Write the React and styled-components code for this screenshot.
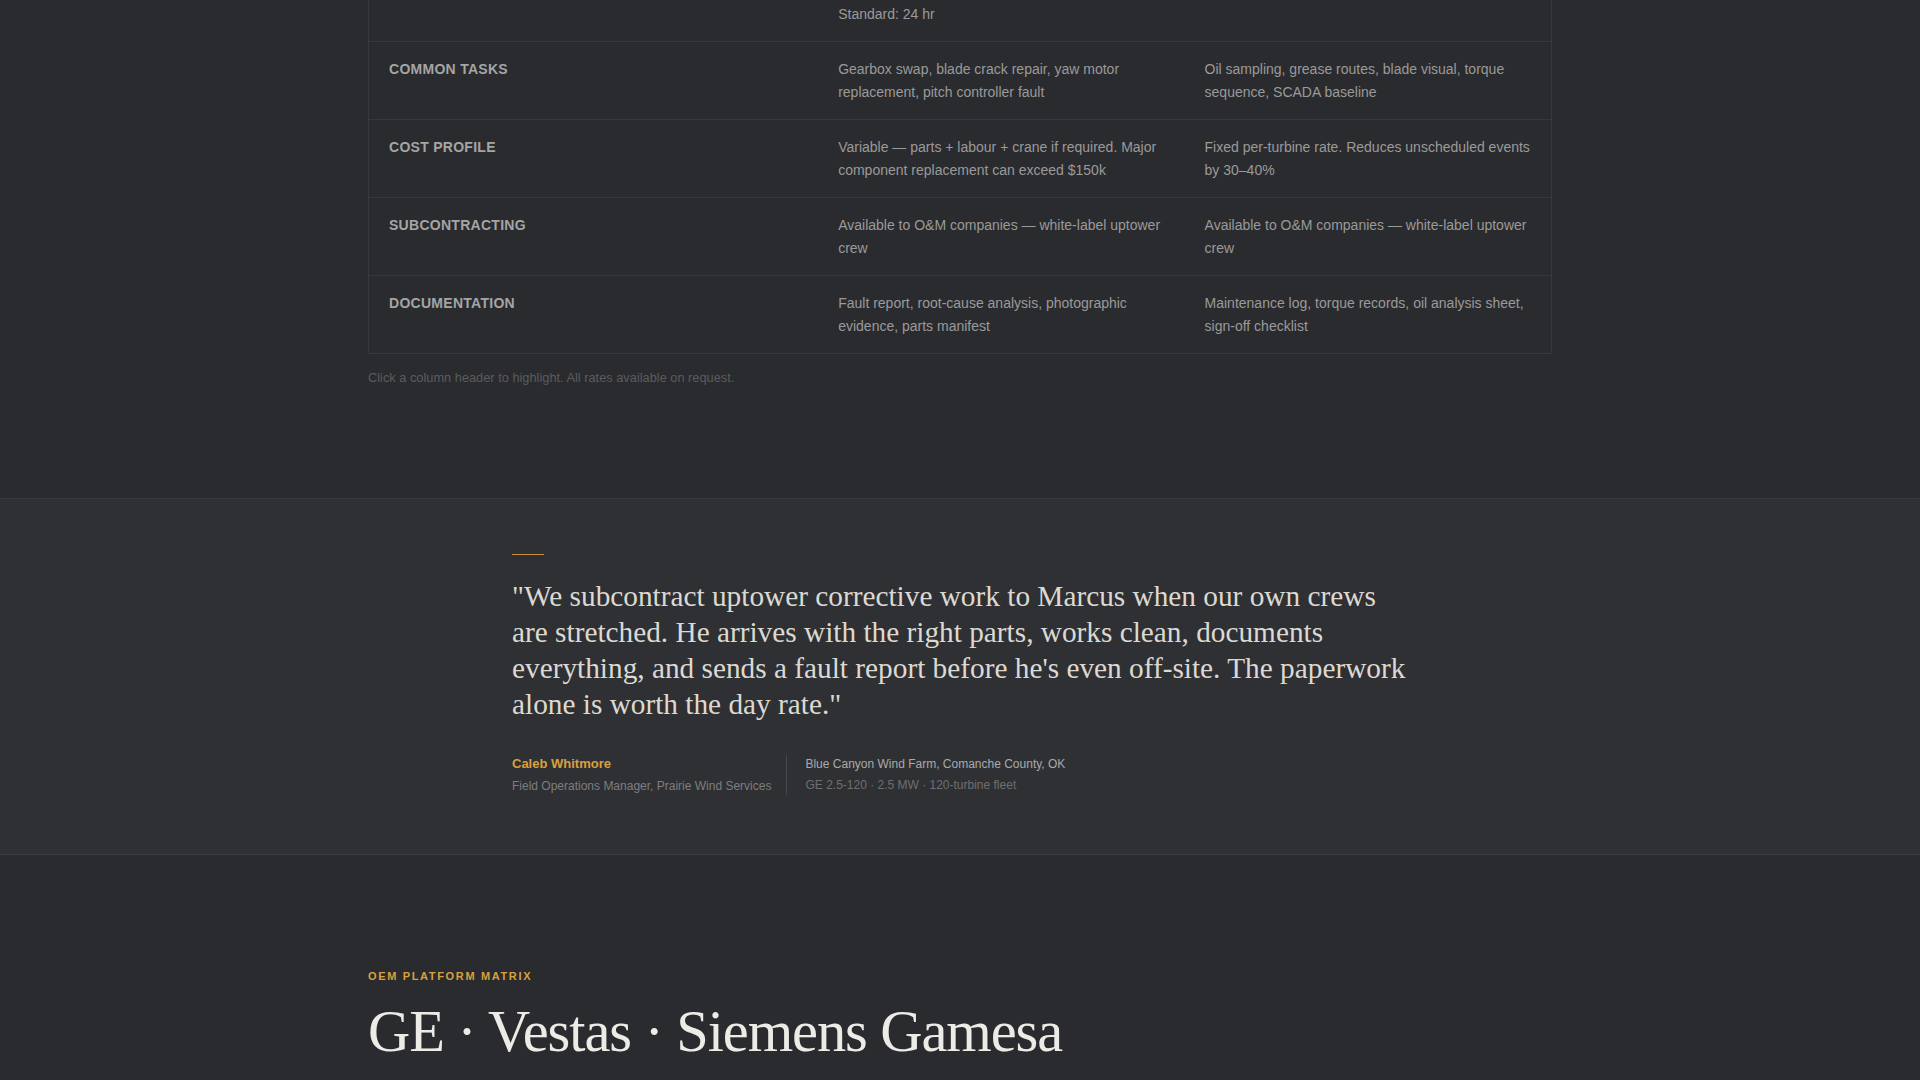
import React from "react";
import styled, { createGlobalStyle } from "styled-components";

const GlobalStyle = createGlobalStyle`
  html, body {
    margin: 0;
    padding: 0;
    background: #2a2b2e;
    font-family: "Liberation Sans", Arial, sans-serif;
    -webkit-font-smoothing: antialiased;
  }
`;

const Section = styled.section`
  background: ${(p) => (p.$alt ? "#2f3033" : "#2a2b2e")};
  border-top: ${(p) => (p.$alt ? "1px solid #3a3b3e" : "none")};
  border-bottom: ${(p) => (p.$alt ? "1px solid #3a3b3e" : "none")};
  padding: ${(p) => p.$pad || "0"};
`;

const Container = styled.div`
  width: ${(p) => p.$width || "1184px"};
  margin: 0 auto;
`;

const Table = styled.div`
  border: 1px solid #38393c;
  border-top: none;
`;

const Row = styled.div`
  display: grid;
  grid-template-columns: 38% 31% 31%;
  border-top: ${(p) => (p.$first ? "none" : "1px solid #37383b")};
`;

const Cell = styled.div`
  padding: ${(p) => (p.$partial ? "3px 20px 15px" : "16px 20px 15px")};
  font-size: 14px;
  line-height: 23px;
  color: #9a9a9a;
`;

const Label = styled(Cell)`
  font-size: 14px;
  font-weight: 700;
  letter-spacing: 0.02em;
  text-transform: uppercase;
  color: #a5a5a5;
`;

const Note = styled.p`
  margin: 15px 0 0;
  font-size: 12.8px;
  line-height: 18px;
  color: #5b5c5f;
`;

const Rule = styled.div`
  width: 32px;
  height: 1px;
  background: #c8913a;
  margin-bottom: 23px;
`;

const Quote = styled.blockquote`
  margin: 0;
  font-family: "Liberation Serif", "Times New Roman", serif;
  font-size: 29.3px;
  line-height: 36px;
  color: #dcd9d2;
`;

const Attribution = styled.div`
  display: flex;
  align-items: stretch;
  margin-top: 33px;
`;

const Person = styled.div`
  padding-right: 15px;
  border-right: 1px solid #47484b;
`;

const Site = styled.div`
  padding-left: 18px;
`;

const Name = styled.div`
  font-size: 13px;
  font-weight: 700;
  line-height: 18px;
  color: #d9a03f;
`;

const Meta = styled.div`
  margin-top: ${(p) => p.$gap || "4px"};
  font-size: 12px;
  line-height: 18px;
  color: ${(p) => p.$color || "#7d7e80"};
`;

const Eyebrow = styled.div`
  font-size: 11px;
  font-weight: 700;
  letter-spacing: 0.15em;
  line-height: 16px;
  text-transform: uppercase;
  color: #d9a03f;
`;

const Heading = styled.h2`
  margin: 16px 0 0;
  font-family: "Liberation Serif", "Times New Roman", serif;
  font-weight: 400;
  font-size: 58.5px;
  line-height: 64px;
  letter-spacing: -0.019em;
  color: #ecebe6;
`;

const rows = [
  {
    label: "Common Tasks",
    a: "Gearbox swap, blade crack repair, yaw motor replacement, pitch controller fault",
    b: "Oil sampling, grease routes, blade visual, torque sequence, SCADA baseline",
  },
  {
    label: "Cost Profile",
    a: "Variable — parts + labour + crane if required. Major component replacement can exceed $150k",
    b: "Fixed per-turbine rate. Reduces unscheduled events by 30–40%",
  },
  {
    label: "Subcontracting",
    a: "Available to O&M companies — white-label uptower crew",
    b: "Available to O&M companies — white-label uptower crew",
  },
  {
    label: "Documentation",
    a: "Fault report, root-cause analysis, photographic evidence, parts manifest",
    b: "Maintenance log, torque records, oil analysis sheet, sign-off checklist",
  },
];

export default function App() {
  return (
    <>
      <GlobalStyle />
      <Section $pad="0 0 111px">
        <Container>
          <Table>
            <Row $first>
              <Label $partial />
              <Cell $partial>Standard: 24 hr</Cell>
              <Cell $partial />
            </Row>
            {rows.map((r) => (
              <Row key={r.label}>
                <Label>{r.label}</Label>
                <Cell>{r.a}</Cell>
                <Cell>{r.b}</Cell>
              </Row>
            ))}
          </Table>
          <Note>Click a column header to highlight. All rates available on request.</Note>
        </Container>
      </Section>

      <Section $alt $pad="55px 0 59px">
        <Container $width="896px">
          <Rule />
          <Quote>
            "We subcontract uptower corrective work to Marcus when our own crews are
            stretched. He arrives with the right parts, works clean, documents
            everything, and sends a fault report before he's even off-site. The
            paperwork alone is worth the day rate."
          </Quote>
          <Attribution>
            <Person>
              <Name>Caleb Whitmore</Name>
              <Meta>Field Operations Manager, Prairie Wind Services</Meta>
            </Person>
            <Site>
              <Meta $gap="0" $color="#a9aaab">
                Blue Canyon Wind Farm, Comanche County, OK
              </Meta>
              <Meta $gap="3px" $color="#6e6f71">
                GE 2.5-120 · 2.5 MW · 120-turbine fleet
              </Meta>
            </Site>
          </Attribution>
        </Container>
      </Section>

      <Section $pad="113px 0 80px">
        <Container>
          <Eyebrow>OEM Platform Matrix</Eyebrow>
          <Heading>GE · Vestas · Siemens Gamesa</Heading>
        </Container>
      </Section>
    </>
  );
}
